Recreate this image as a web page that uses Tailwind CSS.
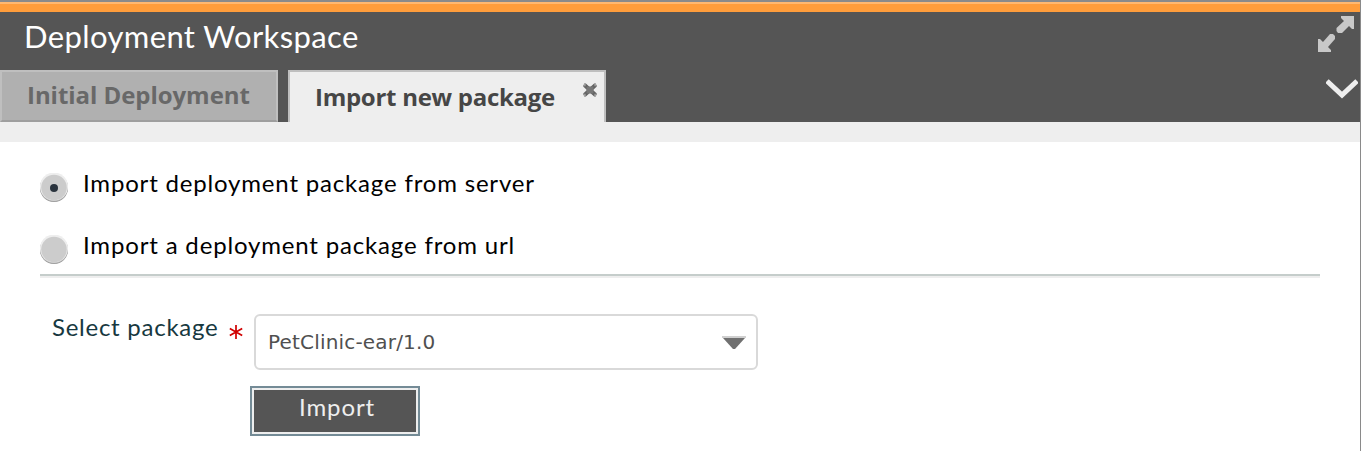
<!DOCTYPE html>
<html lang="en">
<head>
<meta charset="utf-8">
<title>Deployment Workspace</title>
<script src="https://cdn.jsdelivr.net/npm/@tailwindcss/browser@4"></script>
</head>
<body class="bg-white overflow-hidden font-['Lato',sans-serif]">
<div class="w-[1361px] h-[451px] border-r border-[#8a8a8a] overflow-hidden whitespace-nowrap">
  <div class="h-0.5 bg-[#8a8a8a]"></div>
  <div class="h-0.5 bg-[#ffb870]"></div>
  <div class="h-2 bg-[#ff9d3b]"></div>
  <header class="h-[110px] bg-[#555] flex justify-between">
    <div class="flex flex-col justify-between">
      <h1 class="pl-[24px] pt-[6px] text-[31px] leading-[36px] tracking-[0.38px] text-white">Deployment Workspace</h1>
      <nav class="flex gap-2.5 font-['Open_Sans',sans-serif] font-bold text-[24px]">
        <div class="w-[278px] h-[52px] bg-[#b0b0b0] border-2 border-[#bfbfbf] border-b-[#9e9e9e] pl-[25px] pt-[6px] leading-[33px] text-[#686868] tracking-[-0.05px]">Initial Deployment</div>
        <div class="w-[318px] h-[52px] bg-[#eee] border-2 border-b-0 border-[#bfbfbf] pl-[25px] pt-[8px] pr-[6px] leading-[33px] text-[#464646] tracking-[-0.28px] flex justify-between"><span>Import new package</span>
          <svg class="w-4 h-4 mt-[2px]" viewBox="0 0 16 16" fill="none"><path d="M2.500 3L13.500 13M13.500 3L2.500 13" stroke="#626262" stroke-width="4"/><path d="M1 3.500H3V1M13 1V3.500H15M1 12.500H3V15M13 15V12.500H15" stroke="#999" stroke-width="1.500"/><rect x="4.500" y="4.500" width="7" height="7" fill="#777"/></svg>
        </div>
      </nav>
    </div>
    <div class="flex flex-col items-end w-[44px]">
      <svg class="w-9 h-9 mt-[4px] mr-[6px]" viewBox="0 0 36 36" fill="#c8c8c8"><path d="M23 0H36V13H34L31 10L24 17H20L18.500 15V12L26 5L23 2Z"/><path d="M0 23H2L5 26L12 18H15L17 20V23L10 31L13 34V36H0Z"/></svg>
      <svg class="w-8 h-5 mt-[27px] mr-[2px]" viewBox="0 0 32 20" fill="none"><path d="M1 2L16 16L31 2" stroke="#eee" stroke-width="5"/></svg>
    </div>
  </header>
  <div class="h-5 bg-[#eee]"></div>
  <main class="pl-10">
    <div class="w-[1280px] h-[136px] border-b-2 border-[#eee] flex flex-col">
      <div class="h-[134px] border-b-2 border-[#c5cdcb] pt-[25px] text-[24px] leading-[32px] text-black">
        <div class="flex gap-[15px] h-[62px]">
          <svg class="w-7 h-8 mt-[6px]" viewBox="0 0 28 32"><circle cx="14" cy="15" r="14" fill="#8c8c8c"/><circle cx="14" cy="14.500" r="14" fill="#b8b8b8"/><circle cx="14" cy="13.500" r="14" fill="#eee"/><circle cx="14" cy="14.500" r="12.800" fill="#ccc"/><circle cx="14" cy="15" r="4" fill="#29333d"/></svg>
          <span class="tracking-[0.82px]">Import deployment package from server</span>
        </div>
        <div class="flex gap-[15px] h-[44px]">
          <svg class="w-7 h-8 mt-[6px]" viewBox="0 0 28 32"><circle cx="14" cy="15" r="14" fill="#8c8c8c"/><circle cx="14" cy="14.500" r="14" fill="#b8b8b8"/><circle cx="14" cy="13.500" r="14" fill="#eee"/><circle cx="14" cy="14.500" r="12.800" fill="#ccc"/></svg>
          <span class="tracking-[0.83px]">Import a deployment package from url</span>
        </div>
      </div>
    </div>
    <div class="flex pl-3 pt-9">
      <div class="w-[202px] -mt-px text-[24px] leading-[28px] text-[#173840] flex gap-[11px]"><span class="tracking-[0.74px]">Select package</span>
        <svg class="w-3.5 h-3.5 mt-[12px] shrink-0" viewBox="0 0 14 14" fill="none" stroke="#d00000" stroke-width="1.700"><path d="M7 0V14M.8 3.500L13.200 10.500M13.200 3.500L.8 10.500"/></svg>
      </div>
      <div class="w-[504px] h-14 border-2 border-[#d9d9d9] rounded-md pl-3 pr-[10px] flex items-center justify-between font-['DejaVu_Sans',sans-serif] text-[20px] tracking-[0.18px] text-[#505050]"><span>PetClinic-ear/1.0</span>
        <svg class="w-6 h-3.5 mt-[2px]" viewBox="0 0 24 14"><path d="M0 0H24V2H0Z" fill="#d0d0d0"/><path d="M1 2H23L13 13H11Z" fill="#707070"/></svg>
      </div>
    </div>
    <button class="block ml-[210px] mt-4 w-[170px] h-[50px] border-2 border-[#748b96] bg-[#eee] p-0.5"><span class="block h-[42px] bg-[#555] text-[#eee] text-[24px] leading-[34px] tracking-[0.9px] pl-[4px]">Import</span></button>
  </main>
</div>
</body>
</html>
